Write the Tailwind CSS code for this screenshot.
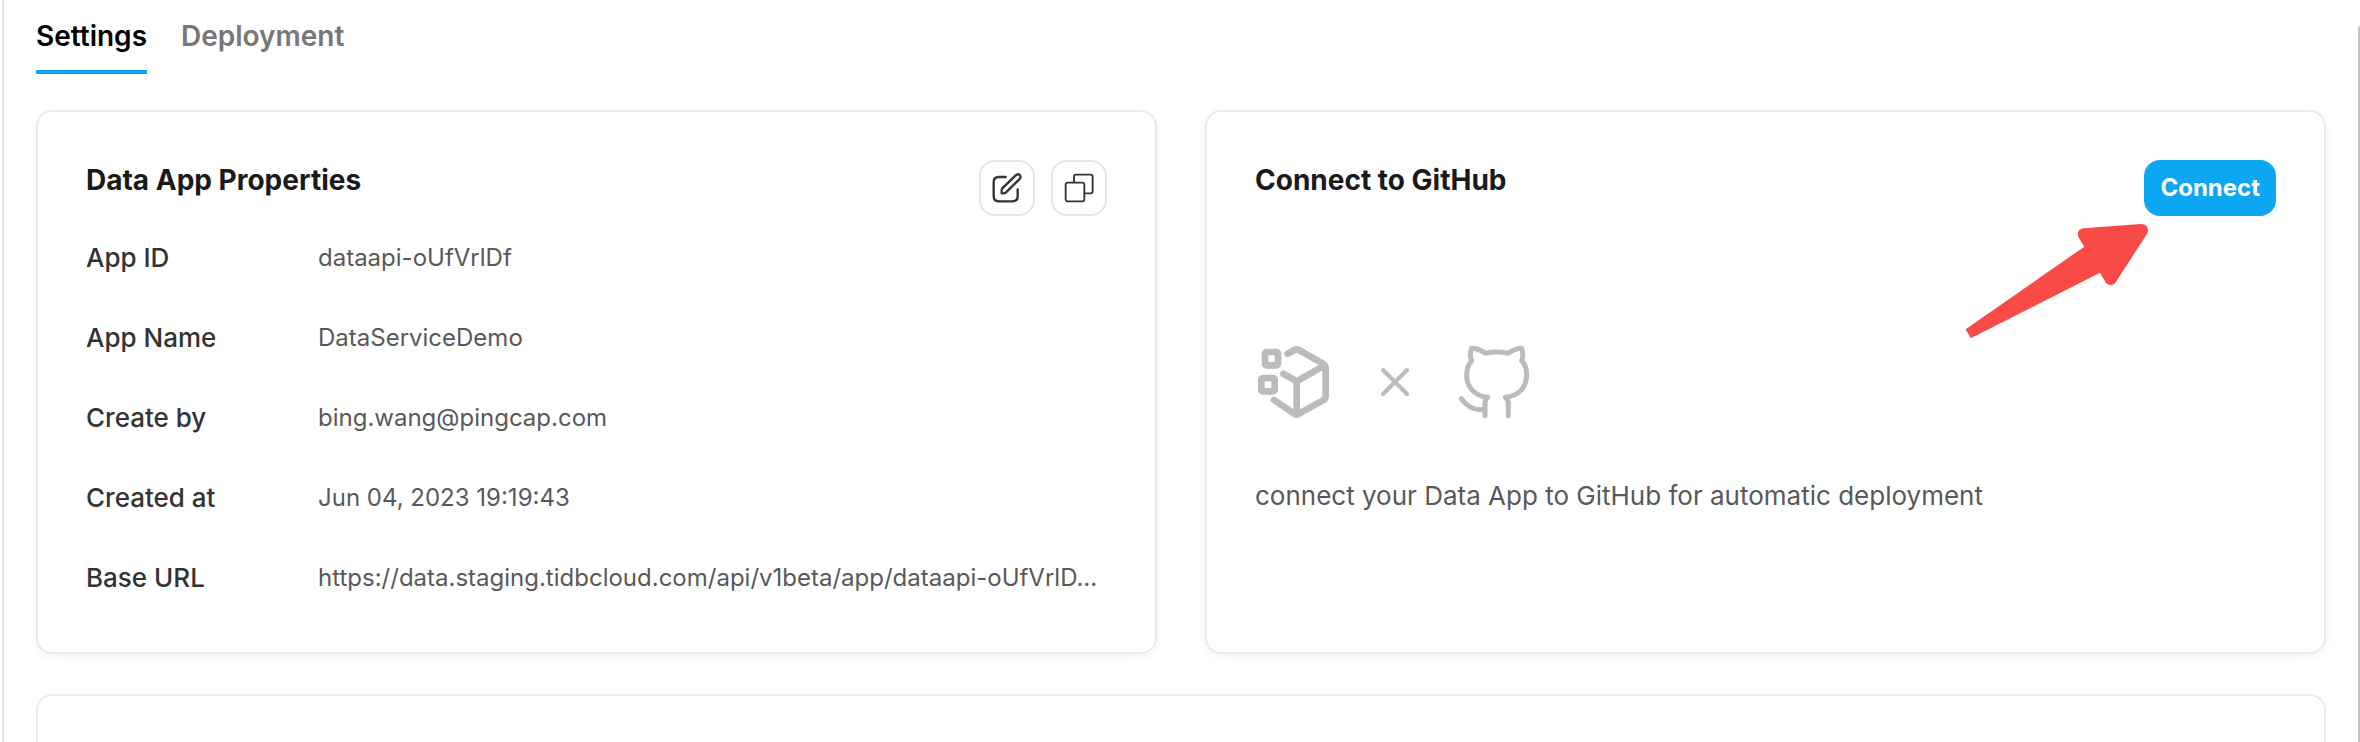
<!DOCTYPE html>
<html lang="en">
<head>
<meta charset="utf-8">
<meta name="viewport" content="width=device-width, initial-scale=1">
<title>Data App Settings</title>
<script src="https://cdn.jsdelivr.net/npm/@tailwindcss/browser@4"></script>
</head>
<body class="bg-white font-['Inter',sans-serif] text-[#333333]">
<div class="relative ml-0.5 h-screen overflow-hidden border-l-2 border-[#e5e5e5] pr-[34px] pl-8">
  <nav class="flex gap-[34px] text-[28px] leading-9 font-semibold" aria-label="Data App">
    <a href="#settings" aria-current="page" class="border-b-4 border-[#0ca6f2] pt-[18px] pb-4 text-black">Settings</a>
    <a href="#deployment" class="pt-[18px] pb-4 text-[#777777]">Deployment</a>
  </nav>

  <main class="mt-9 flex flex-col gap-10">
    <div class="grid grid-cols-2 gap-12">
      <section class="rounded-2xl border-2 border-[#ebebeb] bg-white px-12 pt-12 pb-14 shadow-[0_4px_12px_rgba(0,0,0,0.04)]">
        <header class="flex h-14 items-start justify-between">
          <h2 class="text-[28px] leading-10 font-bold text-[#1a1a1a]">Data App Properties</h2>
          <div class="flex gap-4">
            <button type="button" aria-label="Edit" class="flex size-14 items-center justify-center rounded-2xl border-2 border-[#e5e5e5]">
              <svg class="size-8" viewBox="0 0 96 96" fill="none" stroke="#333333" stroke-width="7" stroke-linecap="round" stroke-linejoin="round" aria-hidden="true">
                <path d="M44 15H23C12 15 8 20 8 30V73C8 84 13 88 23 88H65C76 88 80 83 80 73V52"/>
                <path d="M33 50L74 10C78 6 83 6 86 9C90 13 89 18 85 22L45 61C43 63 41 64 38 64H32V57C32 54 32 52 33 50Z"/>
              </svg>
            </button>
            <button type="button" aria-label="Duplicate" class="flex size-14 items-center justify-center rounded-2xl border-2 border-[#e5e5e5]">
              <svg class="size-8" viewBox="0 0 96 96" fill="none" stroke="#333333" stroke-width="5.5" stroke-linejoin="round" aria-hidden="true">
                <rect x="8" y="32" width="56" height="56" rx="6"/>
                <path d="M33 32V14Q33 8 39 8H83Q89 8 89 14V58Q89 64 83 64H64"/>
              </svg>
            </button>
          </div>
        </header>
        <dl class="mt-6 grid grid-cols-[232px_minmax(0,1fr)] gap-y-11 leading-9">
          <dt class="text-[26px] font-medium">App ID</dt><dd class="text-2xl leading-9 text-[#595959]">dataapi-oUfVrlDf</dd>
          <dt class="text-[26px] font-medium">App Name</dt><dd class="text-2xl leading-9 text-[#595959]">DataServiceDemo</dd>
          <dt class="text-[26px] font-medium">Create by</dt><dd class="text-2xl leading-9 text-[#595959]">bing.wang@pingcap.com</dd>
          <dt class="text-[26px] font-medium">Created at</dt><dd class="text-2xl leading-9 text-[#595959]">Jun 04, 2023 19:19:43</dd>
          <dt class="text-[26px] font-medium">Base URL</dt><dd class="text-2xl leading-9 whitespace-nowrap text-[#595959]">https://data.staging.tidbcloud.com/api/v1beta/app/dataapi-oUfVrlD...</dd>
        </dl>
      </section>

      <section class="relative rounded-2xl border-2 border-[#ebebeb] bg-white p-12 shadow-[0_4px_12px_rgba(0,0,0,0.04)]">
        <header class="flex h-14 items-start justify-between">
          <h2 class="text-[28px] leading-10 font-bold text-[#1a1a1a]">Connect to GitHub</h2>
          <button type="button" class="h-14 rounded-2xl bg-[#0ca6f2] px-4 text-2xl font-bold text-white">Connect</button>
        </header>
        <div class="mt-[126px] flex items-center gap-10 text-[#bbbbbb]">
          <svg class="size-20" viewBox="75 66 240 240" fill="none" stroke="currentColor" stroke-width="20" stroke-linecap="round" stroke-linejoin="round" aria-hidden="true">
            <path d="M173 101L193 90Q200 86 207 90L279 131Q287 136 287 144V229Q287 237 279 241L207 281Q200 286 193 281L132 240"/>
            <path d="M160 161L200 184L282 137M200 184V282"/>
            <rect x="105" y="96" width="39" height="40" rx="5"/>
            <rect x="94" y="174" width="40" height="40" rx="5"/>
          </svg>
          <svg class="size-10" viewBox="435 126 120 120" fill="none" stroke="currentColor" stroke-width="12" stroke-linecap="round" aria-hidden="true">
            <path d="M459 150L531 222M531 150L459 222"/>
          </svg>
          <svg class="size-20" viewBox="675 66 240 240" fill="none" stroke="currentColor" stroke-width="15" stroke-linecap="round" stroke-linejoin="round" aria-hidden="true">
            <path d="M765 287V250C765 242 768 237 773 232C735 228 710 203 710 164C710 147 715 134 725 122C720 111 720 98 725 85C740 85 753 91 766 100C789 95 812 95 835 100C847 91 860 85 875 85C879 98 880 111 875 122C886 134 890 147 890 164C890 203 865 228 826 232C832 237 835 242 835 250V287"/>
            <path d="M694 236C711 259 730 273 762 268"/>
          </svg>
        </div>
        <p class="mt-[54px] text-[26px] leading-10 text-[#595959]">connect your Data App to GitHub for automatic deployment</p>

        <!-- Callout arrow pointing at the Connect button -->
        <svg class="pointer-events-none absolute top-[110px] right-[172px] h-[120px] w-[190px]" viewBox="66 396 570 360" fill="#f84b47" aria-hidden="true">
          <path d="M77 718L433 470L417 444C409 430 415 417 431 415L603 402C620 401 629 417 621 432L528 575C520 588 504 588 496 575L480 548L92 745Z"/>
        </svg>
      </section>
    </div>
    <section class="h-80 rounded-2xl border-2 border-[#ebebeb] bg-white" aria-label="More settings"></section>
  </main>
</div>
<!-- Scroll thumb at the window's right edge -->
<div class="fixed top-[26px] right-0 bottom-0 w-0.5 rounded-tl bg-[#c1c1c1]"></div>
</body>
</html>
